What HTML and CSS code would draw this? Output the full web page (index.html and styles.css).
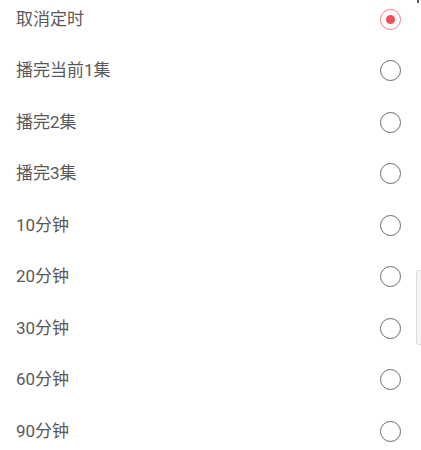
FILE: index.html
```html
<!DOCTYPE html>
<html lang="zh">
<head>
<meta charset="utf-8">
<link rel="stylesheet" href="styles.css">
</head>
<body>
<div class="list">
  <div class="row"><span class="label">取消定时</span><span class="radio checked"></span></div>
  <div class="row"><span class="label">播完当前1集</span><span class="radio"></span></div>
  <div class="row"><span class="label">播完2集</span><span class="radio"></span></div>
  <div class="row"><span class="label">播完3集</span><span class="radio"></span></div>
  <div class="row"><span class="label">10分钟</span><span class="radio"></span></div>
  <div class="row"><span class="label">20分钟</span><span class="radio"></span></div>
  <div class="row"><span class="label">30分钟</span><span class="radio"></span></div>
  <div class="row"><span class="label">60分钟</span><span class="radio"></span></div>
  <div class="row"><span class="label">90分钟</span><span class="radio"></span></div>
</div>
<div class="scroll-thumb"></div>
<div class="corner-mark"></div>
</body>
</html>
```

FILE: styles.css
```css
html, body {
  margin: 0;
  padding: 0;
  background: #ffffff;
  overflow: hidden;
}
body {
  width: 421px;
  height: 450px;
  position: relative;
  font-family: Roboto, "Noto Sans CJK SC", sans-serif;
}
.list {
  margin-top: -6.75px;
  display: flex;
  flex-direction: column;
}
.row {
  height: 51.5px;
  display: flex;
  align-items: center;
  justify-content: space-between;
  padding: 0 20px 0 16px;
  box-sizing: border-box;
}
.label {
  font-size: 17px;
  color: #595959;
  line-height: 1;
}
.radio {
  width: 21px;
  height: 21px;
  box-sizing: border-box;
  border: 1.4px solid #6a6a6a;
  border-radius: 50%;
  position: relative;
}
.radio.checked {
  border: 1.6px solid #f37a86;
}
.radio.checked::after {
  content: "";
  position: absolute;
  left: 50%;
  top: 50%;
  width: 9px;
  height: 9px;
  margin: -4.5px 0 0 -4.5px;
  border-radius: 50%;
  background: #f24b5c;
}
.scroll-thumb {
  position: absolute;
  left: 416px;
  top: 270px;
  width: 8px;
  height: 75px;
  box-sizing: border-box;
  border: 1px solid #dcdcdc;
  border-radius: 3px;
  background: #f6f6f6;
}
.corner-mark {
  position: absolute;
  left: 417px;
  top: 0;
  width: 2px;
  height: 3px;
  background: #555;
}
```
